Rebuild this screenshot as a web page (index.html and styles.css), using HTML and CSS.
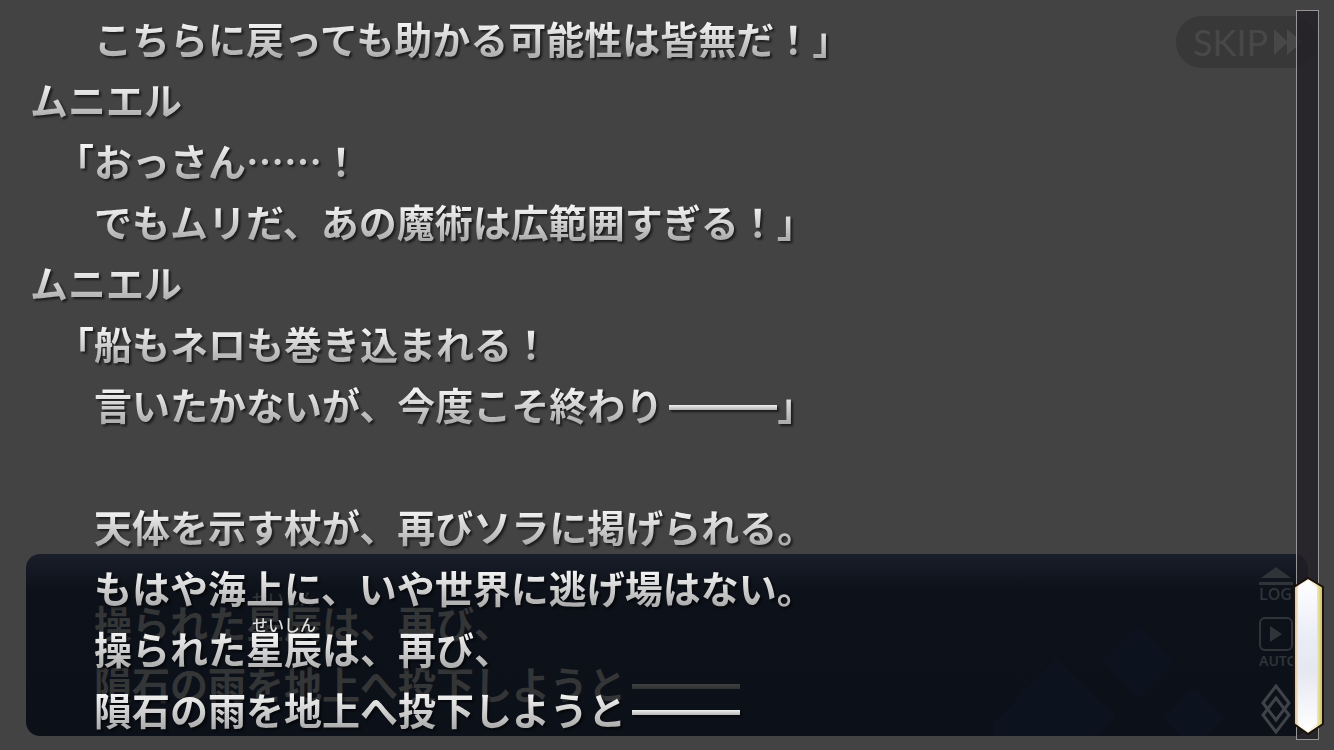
FILE: index.html
```html
<!DOCTYPE html>
<html lang="ja">
<head>
    <meta charset="UTF-8">
    <meta name="viewport" content="width=device-width, initial-scale=1.0">
    <title>LOG</title>
    <link rel="stylesheet" href="styles.css">
</head>
<body>
    <div class="screen">
        <button class="skip" type="button">
            <span>SKIP</span>
            <svg width="28" height="28" viewBox="0 0 28 28">
                <path d="M0 1 L14 14 L0 27 Z M13 1 L28 14 L13 27 Z"/>
            </svg>
        </button>

        <!-- Message window behind the log -->
        <section class="window">
            <svg class="pattern" width="240" height="110" viewBox="0 0 240 110">
                <path d="M62 32 L122 90 L104 110 H0 V96 Z"/>
                <path d="M144 0 L180 36 L144 72 L108 36 Z"/>
                <path d="M200 62 L230 92 L212 110 H188 L170 92 Z"/>
            </svg>
            <div class="message">
                <p>操られた<ruby>星辰<rt>せいしん</rt></ruby>は、再び、</p>
                <p>隕石の雨を地上へ投下しようと<span class="dash">―――</span></p>
            </div>
            <div class="menu">
                <button type="button">
                    <svg width="34" height="18" viewBox="0 0 34 18">
                        <path d="M2 11 L17 0 L32 11 Z M0 15 H34 V18 H0 Z"/>
                    </svg>
                    <span>LOG</span>
                </button>
                <button class="auto" type="button">
                    <svg width="34" height="34" viewBox="0 0 34 34">
                        <rect class="line" x="1" y="1" width="32" height="32" rx="5"/>
                        <path d="M11 9 L23 17 L11 25 Z"/>
                    </svg>
                    <span>AUTO</span>
                </button>
                <button class="next" type="button" aria-label="MENU">
                    <svg width="34" height="50" viewBox="0 0 34 50">
                        <path class="line" d="M17 2 L30 19 L17 36 L4 19 Z"/>
                        <path class="line" d="M17 14 L30 31 L17 48 L4 31 Z"/>
                    </svg>
                </button>
            </div>
        </section>

        <main class="log">
            <p class="text">こちらに戻っても助かる可能性は皆無だ！」</p>
            <p class="name">ムニエル</p>
            <p class="open">「おっさん……！</p>
            <p class="text">でもムリだ、あの魔術は広範囲すぎる！」</p>
            <p class="name">ムニエル</p>
            <p class="open">「船もネロも巻き込まれる！</p>
            <p class="text">言いたかないが、今度こそ終わり<span class="dash">―――</span>」</p>
            <p class="text blank"></p>
            <p class="text">天体を示す杖が、再びソラに掲げられる。</p>
            <p class="text">もはや海上に、いや世界に逃げ場はない。</p>
            <p class="text">操られた<ruby>星辰<rt>せいしん</rt></ruby>は、再び、</p>
            <p class="text">隕石の雨を地上へ投下しようと<span class="dash">―――</span></p>
        </main>

        <div class="scrollbar">
            <svg class="thumb" width="33" height="160" viewBox="0 0 33 160">
                <defs>
                    <linearGradient id="gold" x1="0" x2="1" y1="0" y2="0">
                        <stop offset="0" stop-color="#d9b98c"/>
                        <stop offset="0.2" stop-color="#fff8ee"/>
                        <stop offset="0.75" stop-color="#f5f0d8"/>
                        <stop offset="0.88" stop-color="#e3d888"/>
                        <stop offset="1" stop-color="#c9b060"/>
                    </linearGradient>
                    <linearGradient id="pearl" x1="0" x2="0" y1="0" y2="1">
                        <stop offset="0" stop-color="#ffffff"/>
                        <stop offset="0.4" stop-color="#e9ecf5"/>
                        <stop offset="0.6" stop-color="#e6e8f0"/>
                        <stop offset="1" stop-color="#ffffff"/>
                    </linearGradient>
                </defs>
                <path d="M16 2 L31 11 V148 L16 158 L2 148 V11 Z" fill="url(#gold)" stroke="#1c120a" stroke-width="2"/>
                <path d="M16 4 L25 12 V147 L16 155 L6 147 V12 Z" fill="url(#pearl)"/>
            </svg>
        </div>
    </div>
</body>
</html>
```
FILE: styles.css
```css
* {
    box-sizing: border-box;
}

body {
    margin: 0;
    background-color: #434343;
    font-family: 'Noto Sans CJK JP', sans-serif;
}

.screen {
    position: relative;
    min-height: 100vh;
    overflow: hidden;
}

p {
    margin: 0;
    height: 61px;
    font-size: 38px;
    font-weight: 700;
    line-height: 61px;
    white-space: nowrap;
}

ruby {
    position: relative;
}

/* Reading floats above its kanji without stretching the line */
rt {
    position: absolute;
    top: -4px;
    left: 0;
    right: 0;
    font-size: 16px;
    font-weight: 500;
    line-height: 16px;
    text-align: center;
}

button {
    padding: 0;
    border: none;
    background: none;
    cursor: pointer;
}

/* Log text */
.log {
    position: relative;
    padding: 7px 60px 0 30px;
    filter: drop-shadow(2px 2px 1px rgba(0, 0, 0, 0.6));
}

.log p,
.log ruby {
    color: transparent;
    background: linear-gradient(#f4f4f4 16px, #acacac 50px);
    background-clip: text;
    -webkit-background-clip: text;
}

.log rt {
    color: #e0e0e0;
}

.log .open {
    padding-left: 26px;
}

.log .text {
    padding-left: 64px;
}

.dash {
    position: relative;
    color: transparent;
    background: linear-gradient(#f0f0f0, #b4b4b4) right 29px / 108px 5px no-repeat;
}

/* Skip button */
.skip {
    position: absolute;
    top: 16px;
    right: 17px;
    display: flex;
    align-items: center;
    gap: 6px;
    height: 52px;
    width: 141px;
    padding-left: 17px;
    border-radius: 26px;
    background-color: #383838;
    color: #484848;
    font-family: Lato, sans-serif;
    font-size: 36px;
}

.skip svg {
    fill: #484848;
}

/* Message window */
.window {
    position: absolute;
    left: 26px;
    right: 26px;
    bottom: 14px;
    display: flex;
    justify-content: space-between;
    height: 182px;
    padding: 13px 15px 0 68px;
    border-radius: 14px;
    background: linear-gradient(#191e2a, #0d1119 36px, #0c1018);
    overflow: hidden;
}

.pattern {
    position: absolute;
    right: 74px;
    bottom: 0;
    fill: #0d131e;
}

.message {
    padding-top: 24px;
    color: #343536;
}

.message .dash {
    background: linear-gradient(#404142, #303132) right 29px / 108px 5px no-repeat;
}

.menu {
    display: flex;
    flex-direction: column;
    width: 34px;
    color: #303439;
}

.menu button {
    display: flex;
    flex-direction: column;
    align-items: flex-start;
    color: inherit;
    font-family: 'Open Sans', sans-serif;
    font-size: 16px;
    font-weight: 600;
    line-height: 18px;
}

.menu svg {
    fill: #303439;
}

.menu .line {
    fill: none;
    stroke: #303439;
    stroke-width: 2;
}

.menu .auto {
    gap: 1px;
    margin-top: 14px;
    font-family: 'Noto Sans', sans-serif;
    font-size: 14px;
}

.menu .next {
    margin-top: 14px;
}

.menu .next .line {
    stroke: #3f4349;
    stroke-width: 3;
}

/* Scrollbar */
.scrollbar {
    position: absolute;
    top: 10px;
    right: 15px;
    bottom: 10px;
    width: 23px;
    border: 1px solid #969696;
    background-color: rgba(34, 30, 38, 0.8);
}

.thumb {
    position: absolute;
    left: -5px;
    bottom: 3px;
}
```
